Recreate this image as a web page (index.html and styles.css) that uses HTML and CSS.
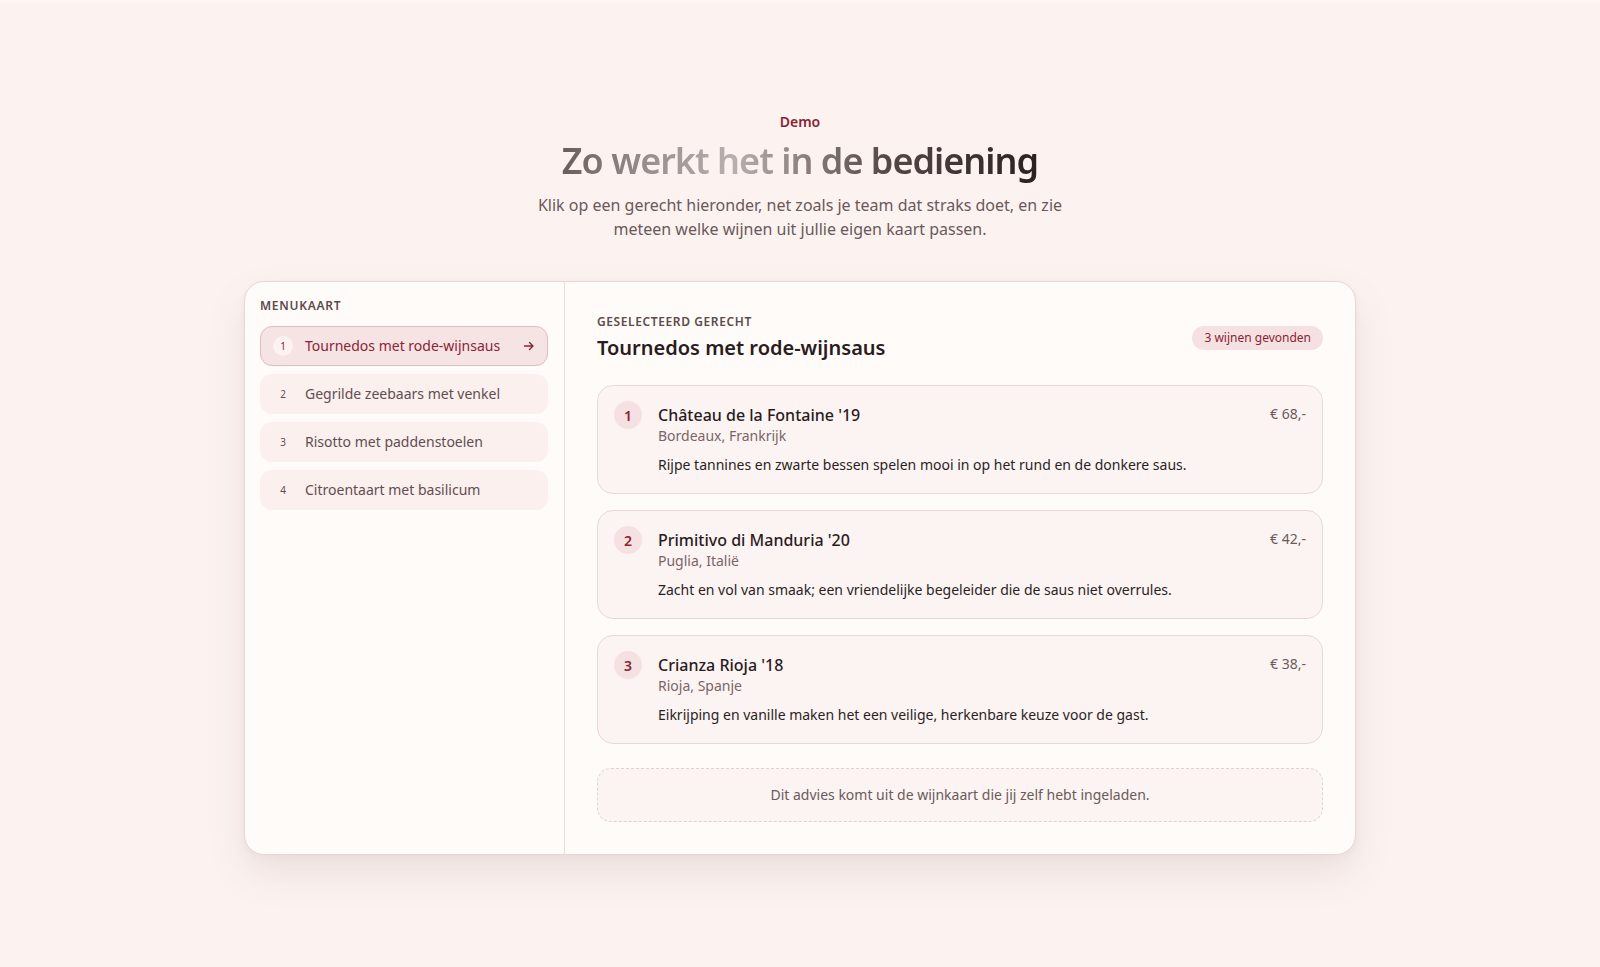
FILE: index.html
```html
<!DOCTYPE html>
<html lang="nl">
<head>
<meta charset="utf-8">
<title>Demo – Zo werkt het in de bediening</title>
<link rel="stylesheet" href="styles.css">
</head>
<body>
<main class="page">
  <header class="intro">
    <p class="eyebrow">Demo</p>
    <h1 class="headline"><span class="headline-text">Zo werkt het in de bediening</span></h1>
    <p class="lead">Klik op een gerecht hieronder, net zoals je team dat straks doet, en zie meteen welke wijnen uit jullie eigen kaart passen.</p>
  </header>

  <section class="demo-card">
    <aside class="menu">
      <h2 class="menu-label">Menukaart</h2>
      <ul class="menu-list">
        <li class="menu-item is-active">
          <span class="menu-num">1</span>
          <span class="menu-name">Tournedos met rode-wijnsaus</span>
          <svg class="menu-arrow" viewBox="0 0 12 12" width="12" height="12" aria-hidden="true"><path d="M1.5 6h8.5M6.5 2.5 10 6l-3.5 3.5" fill="none" stroke="currentColor" stroke-width="1.4" stroke-linecap="round" stroke-linejoin="round"/></svg>
        </li>
        <li class="menu-item">
          <span class="menu-num">2</span>
          <span class="menu-name">Gegrilde zeebaars met venkel</span>
        </li>
        <li class="menu-item">
          <span class="menu-num">3</span>
          <span class="menu-name">Risotto met paddenstoelen</span>
        </li>
        <li class="menu-item">
          <span class="menu-num">4</span>
          <span class="menu-name">Citroentaart met basilicum</span>
        </li>
      </ul>
    </aside>

    <div class="result">
      <div class="result-head">
        <div>
          <p class="result-label">Geselecteerd gerecht</p>
          <h3 class="result-title">Tournedos met rode-wijnsaus</h3>
        </div>
        <span class="badge">3 wijnen gevonden</span>
      </div>

      <ol class="wine-list">
        <li class="wine">
          <span class="wine-num">1</span>
          <div class="wine-body">
            <p class="wine-name">Château de la Fontaine '19</p>
            <p class="wine-origin">Bordeaux, Frankrijk</p>
            <p class="wine-note">Rijpe tannines en zwarte bessen spelen mooi in op het rund en de donkere saus.</p>
          </div>
          <span class="wine-price">€ 68,-</span>
        </li>
        <li class="wine">
          <span class="wine-num">2</span>
          <div class="wine-body">
            <p class="wine-name">Primitivo di Manduria '20</p>
            <p class="wine-origin">Puglia, Italië</p>
            <p class="wine-note">Zacht en vol van smaak; een vriendelijke begeleider die de saus niet overrules.</p>
          </div>
          <span class="wine-price">€ 42,-</span>
        </li>
        <li class="wine">
          <span class="wine-num">3</span>
          <div class="wine-body">
            <p class="wine-name">Crianza Rioja '18</p>
            <p class="wine-origin">Rioja, Spanje</p>
            <p class="wine-note">Eikrijping en vanille maken het een veilige, herkenbare keuze voor de gast.</p>
          </div>
          <span class="wine-price">€ 38,-</span>
        </li>
      </ol>

      <p class="footnote">Dit advies komt uit de wijnkaart die jij zelf hebt ingeladen.</p>
    </div>
  </section>
</main>
</body>
</html>
```

FILE: styles.css
```css
* { box-sizing: border-box; }

html, body {
  margin: 0;
  padding: 0;
}

body {
  background: #fcf3f1;
  font-family: "Noto Sans", "Open Sans", "Liberation Sans", sans-serif;
  color: #2b1e1f;
  border-top: 2px solid #fdf7f5;
  min-height: 967px;
}

.page {
  padding: 110px 0 80px;
}

.intro {
  text-align: center;
}

.eyebrow {
  margin: 0 0 7px;
  font-size: 14px;
  line-height: 20px;
  font-weight: 600;
  color: #8b2335;
}

.headline {
  margin: 0 0 10px;
  font-size: 36px;
  line-height: 44px;
  font-weight: 600;
  letter-spacing: -0.027em;
}

.headline-text {
  display: inline-block;
  background: linear-gradient(90deg, #6c5d5d 0%, #9a8e8e 18%, #b9afaf 36%, #8a7c7c 52%, #574848 68%, #2c2021 100%);
  -webkit-background-clip: text;
  background-clip: text;
  color: transparent;
}

.lead {
  margin: 0 auto;
  max-width: 540px;
  font-size: 16px;
  line-height: 24px;
  color: #6a5959;
}

.demo-card {
  width: 1112px;
  margin: 40px auto 0;
  display: grid;
  grid-template-columns: 320px 1fr;
  background: #fffbf9;
  border: 1px solid #e7d8d6;
  border-radius: 20px;
  box-shadow: 0 18px 40px rgba(90, 50, 50, 0.10), 0 2px 6px rgba(90, 50, 50, 0.04);
  overflow: hidden;
}

/* Sidebar */
.menu {
  border-right: 1px solid #eadcda;
  padding: 16px 16px 24px 15px;
}

.menu-label {
  margin: 0 0 12px;
  font-size: 12px;
  line-height: 16px;
  font-weight: 600;
  letter-spacing: 0.06em;
  text-transform: uppercase;
  color: #5c4b4c;
}

.menu-list {
  list-style: none;
  margin: 0;
  padding: 0;
  display: flex;
  flex-direction: column;
  gap: 8px;
}

.menu-item {
  display: flex;
  align-items: center;
  gap: 12px;
  height: 40px;
  padding: 0 11px 0 12px;
  border: 1px solid transparent;
  border-radius: 12px;
  background: #fcf0ef;
  font-size: 14px;
  line-height: 20px;
  color: #5f4e4f;
}

.menu-item.is-active {
  background: #f6e3e3;
  border-color: #ddbfc2;
  color: #8b2335;
}

.menu-num {
  flex: 0 0 20px;
  width: 20px;
  height: 20px;
  border-radius: 50%;
  display: flex;
  align-items: center;
  justify-content: center;
  font-size: 10px;
  line-height: 1;
  color: #5f4e4f;
  background: #fcf0ef;
}

.is-active .menu-num {
  background: #fcf2f1;
  color: #8b2335;
}

.menu-name {
  flex: 1;
}

.menu-arrow {
  flex: 0 0 12px;
  color: #8b2335;
  margin-right: 1px;
}

/* Result */
.result {
  padding: 32px;
}

.result-head {
  display: flex;
  align-items: center;
  justify-content: space-between;
}

.result-label {
  margin: 0;
  font-size: 12px;
  line-height: 16px;
  font-weight: 600;
  letter-spacing: 0.05em;
  text-transform: uppercase;
  color: #5c4b4c;
}

.result-title {
  margin: 4px 0 0;
  font-size: 20px;
  line-height: 28px;
  font-weight: 600;
  color: #2a1c1d;
}

.badge {
  padding: 4px 12px;
  border-radius: 999px;
  background: #f5e1e2;
  color: #8b2335;
  font-size: 12px;
  line-height: 16px;
}

.wine-list {
  list-style: none;
  margin: 23px 0 0;
  padding: 0;
  display: flex;
  flex-direction: column;
  gap: 16px;
}

.wine {
  display: grid;
  grid-template-columns: 28px 1fr auto;
  column-gap: 16px;
  align-items: start;
  padding: 15px 16px 17px;
  background: #fcf4f3;
  border: 1px solid #e8d9d7;
  border-radius: 16px;
}

.wine-num {
  width: 28px;
  height: 28px;
  border-radius: 50%;
  background: #f5e1e2;
  color: #8b2335;
  font-size: 14px;
  font-weight: 600;
  display: flex;
  align-items: center;
  justify-content: center;
}

.wine-body p {
  margin: 0;
}

.wine-name {
  padding-top: 3px;
  font-size: 16px;
  line-height: 22px;
  font-weight: 500;
  color: #2a1c1d;
}

.wine-origin {
  font-size: 14px;
  line-height: 20px;
  color: #7a6566;
}

.wine-body .wine-note {
  margin-top: 8px;
  font-size: 14px;
  line-height: 22px;
  color: #2b1e1f;
}

.wine-price {
  padding-top: 3px;
  font-size: 14px;
  line-height: 20px;
  color: #6b5a5a;
}

.footnote {
  margin: 24px 0 0;
  padding: 16px;
  text-align: center;
  font-size: 14px;
  line-height: 20px;
  color: #6b5a5a;
  background: #fcf4f3;
  border: 1px dashed #e3d1d0;
  border-radius: 14px;
}
```
